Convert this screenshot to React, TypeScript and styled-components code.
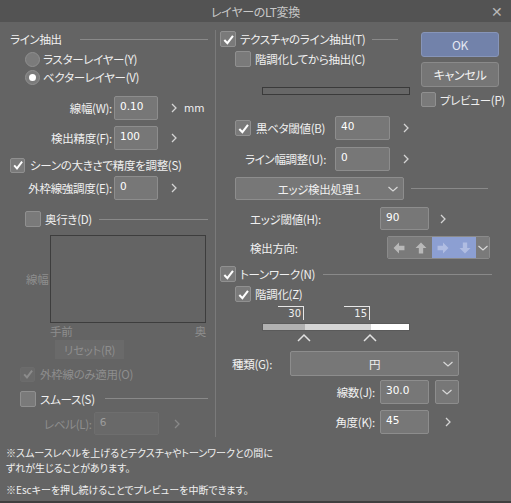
import React from "react";
import styled, { createGlobalStyle } from "styled-components";

const GlobalStyle = createGlobalStyle`
  html, body {
    margin: 0;
    padding: 0;
    background: #646464;
  }
  body {
    font-family: "Noto Sans CJK JP", "Noto Sans", sans-serif;
  }
`;

const TEXT = "#f0f0f0";
const DIM = "#8e8e8e";

const Dialog = styled.div`
  width: 511px;
  height: 503px;
  box-sizing: border-box;
  background: #646464;
  color: ${TEXT};
  font-size: 11.5px;
  font-feature-settings: "palt";
  letter-spacing: -0.3px;
  border-bottom: 2px solid #3f3f3f;
  display: flex;
  flex-direction: column;
  overflow: hidden;
`;

const TitleBar = styled.div`
  height: 22px;
  flex-shrink: 0;
  background: #535353;
  color: #c8c8c8;
  font-size: 12px;
  display: grid;
  grid-template-columns: 1fr auto 1fr;
  align-items: center;
`;

const Close = styled.span`
  justify-self: end;
  padding-right: 8px;
  font-size: 14px;
  color: #b8b8b8;
`;

const Body = styled.div`
  display: flex;
  height: 415px;
  padding-top: 8px;
  box-sizing: border-box;
  flex-shrink: 0;
`;

const LeftPanel = styled.div`
  width: 216px;
  box-sizing: border-box;
  border-right: 1px solid #7a7a7a;
  display: flex;
  flex-direction: column;
`;

const RightPanel = styled.div`
  flex: 1;
  display: flex;
  flex-direction: column;
`;

const Row = styled.div<{ $mt?: number; $pl?: number; $pr?: number; $h?: number }>`
  display: flex;
  align-items: center;
  flex-shrink: 0;
  height: ${(p) => p.$h ?? 16}px;
  margin-top: ${(p) => p.$mt ?? 0}px;
  padding-left: ${(p) => p.$pl ?? 0}px;
  padding-right: ${(p) => p.$pr ?? 0}px;
`;

const Label = styled.span<{ $w?: number; $right?: boolean; $dim?: boolean; $ml?: number }>`
  ${(p) => (p.$w ? `width: ${p.$w}px;` : "")}
  flex-shrink: 0;
  white-space: nowrap;
  text-align: ${(p) => (p.$right ? "right" : "left")};
  margin-left: ${(p) => p.$ml ?? 0}px;
  color: ${(p) => (p.$dim ? DIM : TEXT)};
`;

const Rule = styled.div<{ $ml?: number; $mr?: number }>`
  flex: 1;
  height: 1px;
  background: #898989;
  margin-left: ${(p) => p.$ml ?? 0}px;
  margin-right: ${(p) => p.$mr ?? 0}px;
`;

const Field = styled.div<{ $w: number; $disabled?: boolean; $ml?: number }>`
  width: ${(p) => p.$w}px;
  height: 100%;
  box-sizing: border-box;
  flex-shrink: 0;
  margin-left: ${(p) => p.$ml ?? 0}px;
  background: ${(p) => (p.$disabled ? "#696969" : "#777777")};
  border: 1px solid ${(p) => (p.$disabled ? "#6e6e6e" : "#8d8d8d")};
  border-radius: 2px;
  padding: 2px 0 0 5px;
  line-height: 15px;
  font-family: "DejaVu Sans", sans-serif;
  font-size: 10.5px;
  letter-spacing: 0;
  color: ${(p) => (p.$disabled ? "#9c9c9c" : "#ffffff")};
`;

const Unit = styled.span`
  margin-left: 6px;
  font-family: "DejaVu Sans", sans-serif;
  font-size: 10.5px;
  letter-spacing: 0;
`;

const BoxWrap = styled.span<{ $size: number; $disabled?: boolean }>`
  width: ${(p) => p.$size}px;
  height: ${(p) => p.$size}px;
  box-sizing: border-box;
  flex-shrink: 0;
  border-radius: 2px;
  background: ${(p) => (p.$disabled ? "#6a6a6a" : "#7a7a7a")};
  border: 1px solid ${(p) => (p.$disabled ? "#6c6c6c" : "#909090")};
  display: flex;
  align-items: center;
  justify-content: center;
`;

const Check = ({
  checked,
  disabled,
  size = 16,
}: {
  checked?: boolean;
  disabled?: boolean;
  size?: number;
}) => (
  <BoxWrap $size={size} $disabled={disabled}>
    {checked && (
      <svg width={size - 3} height={size - 3} viewBox="0 0 14 14">
        <polyline
          points="2.5,7.5 5.8,11 11.8,3"
          fill="none"
          stroke={disabled ? "#8c8c8c" : "#ffffff"}
          strokeWidth="2.2"
        />
      </svg>
    )}
  </BoxWrap>
);

const RadioCircle = styled.span`
  width: 15px;
  height: 15px;
  box-sizing: border-box;
  border-radius: 50%;
  flex-shrink: 0;
  background: #7b7b7b;
  border: 1px solid #8f8f8f;
  display: flex;
  align-items: center;
  justify-content: center;
`;

const Dot = styled.span`
  width: 7px;
  height: 7px;
  border-radius: 50%;
  background: #ffffff;
`;

const Chevron = ({ ml = 0, dim }: { ml?: number; dim?: boolean }) => (
  <svg width="8" height="12" viewBox="0 0 8 12" style={{ marginLeft: ml, flexShrink: 0 }}>
    <polyline
      points="2,2 6,6 2,10"
      fill="none"
      stroke={dim ? "#888888" : "#d4d4d4"}
      strokeWidth="1.3"
    />
  </svg>
);

const DownChevron = () => (
  <svg width="12" height="8" viewBox="0 0 12 8">
    <polyline points="1.5,2 6,6 10.5,2" fill="none" stroke="#d8d8d8" strokeWidth="1.2" />
  </svg>
);

const Button = styled.div<{ $primary?: boolean; $h: number; $mt?: number }>`
  height: ${(p) => p.$h}px;
  margin-top: ${(p) => p.$mt ?? 0}px;
  box-sizing: border-box;
  border-radius: 3px;
  background: ${(p) => (p.$primary ? "#7282aa" : "#767676")};
  border: 1px solid ${(p) => (p.$primary ? "#8795b9" : "#8a8a8a")};
  color: ${(p) => (p.$primary ? "#e4e8f2" : "#f2f2f2")};
  display: flex;
  align-items: center;
  justify-content: center;
  font-size: 12px;
`;

const ResetButton = styled.div`
  width: 69px;
  height: 19px;
  margin-left: 55px;
  margin-top: 3px;
  flex-shrink: 0;
  background: #6a6a6a;
  color: ${DIM};
  display: flex;
  align-items: center;
  justify-content: center;
`;

const Dropdown = styled.div<{ $w: number; $ml?: number; $iconOnly?: boolean }>`
  width: ${(p) => p.$w}px;
  height: 100%;
  box-sizing: border-box;
  flex-shrink: 0;
  margin-left: ${(p) => p.$ml ?? 0}px;
  background: #777777;
  border: 1px solid #8d8d8d;
  border-radius: 2px;
  display: grid;
  grid-template-columns: ${(p) => (p.$iconOnly ? "1fr" : "20px 1fr 20px")};
  align-items: center;
  justify-items: center;
`;

const GraphRow = styled.div`
  display: flex;
  align-items: center;
  height: 88px;
  margin-top: 8px;
  padding-left: 26px;
  flex-shrink: 0;
`;

const GraphBox = styled.div`
  width: 156px;
  height: 100%;
  box-sizing: border-box;
  border: 1px solid #3d3d3d;
`;

const AxisRow = styled.div`
  display: flex;
  justify-content: space-between;
  width: 156px;
  height: 12px;
  line-height: 12px;
  margin: 2px 0 0 50px;
  color: ${DIM};
`;

const TopBlock = styled.div`
  display: flex;
  flex-shrink: 0;
`;

const TopMain = styled.div`
  flex: 1;
  display: flex;
  flex-direction: column;
`;

const ButtonCol = styled.div`
  width: 78px;
  margin: 2px 12px 0 11px;
  display: flex;
  flex-direction: column;
`;

const EmptyBar = styled.div`
  height: 8px;
  margin: 20px 0 0 46px;
  box-sizing: border-box;
  border: 1px solid #3a3a3a;
  background: #676767;
`;

const DirControl = styled.div`
  display: flex;
  height: 100%;
  box-sizing: border-box;
  border: 1px solid #8a8a8a;
  border-radius: 2px;
  overflow: hidden;
`;

const DirSeg = styled.div<{ $active?: boolean; $w?: number }>`
  width: ${(p) => p.$w ?? 22}px;
  height: 100%;
  background: ${(p) => (p.$active ? "#8c9fd2" : "#7a7a7a")};
  display: flex;
  align-items: center;
  justify-content: center;
`;

const SliderBlock = styled.div`
  position: relative;
  width: 148px;
  height: 37px;
  margin: 4px 0 0 46px;
  flex-shrink: 0;
`;

const GradBar = styled.div`
  position: absolute;
  left: 0;
  right: 0;
  top: 17px;
  height: 8px;
  display: flex;
  box-sizing: border-box;
  border: 1px solid #5a5a5a;
`;

const GradSeg = styled.div<{ $c: string; $w?: number }>`
  background: ${(p) => p.$c};
  ${(p) => (p.$w ? `width: ${p.$w}px;` : "flex: 1;")}
`;

const Marker = styled.div`
  position: absolute;
  top: 0;
  width: 26px;
  height: 14px;
  box-sizing: border-box;
  border-top: 1px solid #e6e6e6;
  border-right: 1px solid #e6e6e6;
  text-align: right;
  padding-right: 2px;
  font-family: "DejaVu Sans", sans-serif;
  font-size: 10px;
  letter-spacing: 0;
  line-height: 14px;
`;

const Caret = styled.svg`
  position: absolute;
  top: 27px;
`;

const Notes = styled.div`
  padding: 9px 0 0 6px;
  font-size: 10px;
  line-height: 14.5px;
  letter-spacing: 0px;
`;

const NoteBlock = styled.div<{ $mt?: number }>`
  margin-top: ${(p) => p.$mt ?? 0}px;
`;

const Arrow = ({ dir, color }: { dir: "l" | "u" | "r" | "d"; color: string }) => {
  const rot = { l: 0, u: 90, r: 180, d: 270 }[dir];
  return (
    <svg width="12" height="12" viewBox="0 0 11 11">
      <polygon
        points="0.5,5.5 5.5,0.5 5.5,3.5 10.5,3.5 10.5,7.5 5.5,7.5 5.5,10.5"
        fill={color}
        transform={`rotate(${rot} 5.5 5.5)`}
      />
    </svg>
  );
};

const FieldRow = ({
  label,
  value,
  mt,
  unit,
}: {
  label: string;
  value: string;
  mt: number;
  unit?: string;
}) => (
  <Row $mt={mt} $h={24}>
    <Label $w={112} $right>
      {label}
    </Label>
    <Field $w={44} $ml={2}>
      {value}
    </Field>
    <Chevron ml={12} />
    {unit && <Unit>{unit}</Unit>}
  </Row>
);

const markers = [
  { value: 30, at: 42 },
  { value: 15, at: 108 },
];

export default function App() {
  return (
    <>
      <GlobalStyle />
      <Dialog>
        <TitleBar>
          <span />
          <span>レイヤーのLT変換</span>
          <Close>✕</Close>
        </TitleBar>
        <Body>
          <LeftPanel>
            <Row $mt={1} $pl={10} $pr={7}>
              <Label>ライン抽出</Label>
              <Rule $ml={18} />
            </Row>
            <Row $mt={4} $pl={25}>
              <RadioCircle />
              <Label $ml={3}>ラスターレイヤー(Y)</Label>
            </Row>
            <Row $mt={2} $pl={25}>
              <RadioCircle>
                <Dot />
              </RadioCircle>
              <Label $ml={3}>ベクターレイヤー(V)</Label>
            </Row>
            <FieldRow label="線幅(W):" value="0.10" mt={11} unit="mm" />
            <FieldRow label="検出精度(F):" value="100" mt={6} />
            <Row $mt={7} $pl={10}>
              <Check checked size={15} />
              <Label $ml={5}>シーンの大きさで精度を調整(S)</Label>
            </Row>
            <FieldRow label="外枠線強調度(E):" value="0" mt={3} />
            <Row $mt={11} $pl={25} $pr={7}>
              <Check />
              <Label $ml={4}>奥行き(D)</Label>
              <Rule $ml={7} />
            </Row>
            <GraphRow>
              <Label $w={24} $dim>
                線幅
              </Label>
              <GraphBox />
            </GraphRow>
            <AxisRow>
              <span>手前</span>
              <span>奥</span>
            </AxisRow>
            <ResetButton>リセット(R)</ResetButton>
            <Row $mt={7} $pl={20}>
              <Check checked disabled size={15} />
              <Label $ml={5} $dim>
                外枠線のみ適用(O)
              </Label>
            </Row>
            <Row $mt={8} $pl={20} $pr={7} $h={17}>
              <Check />
              <Label $ml={4}>スムース(S)</Label>
              <Rule $ml={10} />
            </Row>
            <Row $mt={5} $pl={44} $h={23}>
              <Label $dim>レベル(L):</Label>
              <Field $w={65} $ml={2} $disabled>
                6
              </Field>
              <Chevron ml={14} dim />
            </Row>
          </LeftPanel>

          <RightPanel>
            <TopBlock>
              <TopMain>
                <Row $mt={1} $pl={4}>
                  <Check checked />
                  <Label $ml={4}>テクスチャのライン抽出(T)</Label>
                  <Rule $ml={7} $mr={12} />
                </Row>
                <Row $mt={4} $pl={19}>
                  <Check />
                  <Label $ml={4}>階調化してから抽出(C)</Label>
                </Row>
                <EmptyBar />
              </TopMain>
              <ButtonCol>
                <Button $primary $h={25}>
                  OK
                </Button>
                <Button $h={25} $mt={5}>
                  キャンセル
                </Button>
                <Row $mt={5} $h={15}>
                  <Check size={15} />
                  <Label $ml={4}>プレビュー(P)</Label>
                </Row>
              </ButtonCol>
            </TopBlock>

            <Row $mt={9} $pl={19} $h={24}>
              <Check checked />
              <Label $w={79} $ml={5}>
                黒ベタ閾値(B)
              </Label>
              <Field $w={55}>40</Field>
              <Chevron ml={12} />
            </Row>
            <Row $mt={7} $pl={29} $h={24}>
              <Label $w={90}>ライン幅調整(U):</Label>
              <Field $w={55}>0</Field>
              <Chevron ml={12} />
            </Row>
            <Row $mt={6} $pl={19} $pr={23} $h={23}>
              <Dropdown $w={169}>
                <span />
                <span>エッジ検出処理１</span>
                <DownChevron />
              </Dropdown>
              <Rule $ml={7} />
            </Row>
            <Row $mt={7} $pl={34} $h={23}>
              <Label $w={130}>エッジ閾値(H):</Label>
              <Field $w={49}>90</Field>
              <Chevron ml={10} />
            </Row>
            <Row $mt={6} $pl={34} $h={23}>
              <Label $w={137}>検出方向:</Label>
              <DirControl>
                <DirSeg>
                  <Arrow dir="l" color="#b8b8b8" />
                </DirSeg>
                <DirSeg>
                  <Arrow dir="u" color="#b8b8b8" />
                </DirSeg>
                <DirSeg $active>
                  <Arrow dir="r" color="#b0bde2" />
                </DirSeg>
                <DirSeg $active>
                  <Arrow dir="d" color="#b0bde2" />
                </DirSeg>
                <DirSeg $w={13}>
                  <DownChevron />
                </DirSeg>
              </DirControl>
            </Row>
            <Row $mt={7} $pl={4} $pr={19}>
              <Check checked />
              <Label $ml={4}>トーンワーク(N)</Label>
              <Rule $ml={8} />
            </Row>
            <Row $mt={4} $pl={19}>
              <Check checked />
              <Label $ml={4}>階調化(Z)</Label>
            </Row>
            <SliderBlock>
              {markers.map((m) => (
                <Marker key={m.value} style={{ left: m.at - 26 }}>
                  {m.value}
                </Marker>
              ))}
              <GradBar>
                <GradSeg $c="#b1b1b1" $w={42} />
                <GradSeg $c="#d5d5d5" $w={66} />
                <GradSeg $c="#ffffff" />
              </GradBar>
              {markers.map((m) => (
                <Caret
                  key={m.value}
                  width="14"
                  height="9"
                  viewBox="0 0 14 9"
                  style={{ left: m.at - 7 }}
                >
                  <polyline points="1,8 7,2 13,8" fill="none" stroke="#e2e2e2" strokeWidth="1.5" />
                </Caret>
              ))}
            </SliderBlock>
            <Row $mt={8} $pl={16} $h={25}>
              <Label $w={58}>種類(G):</Label>
              <Dropdown $w={169}>
                <span />
                <span>円</span>
                <DownChevron />
              </Dropdown>
            </Row>
            <Row $mt={4} $h={24}>
              <Label $w={159} $right>
                線数(J):
              </Label>
              <Field $w={49} $ml={5}>
                30.0
              </Field>
              <Dropdown $w={24} $ml={6} $iconOnly>
                <DownChevron />
              </Dropdown>
            </Row>
            <Row $mt={6} $h={24}>
              <Label $w={159} $right>
                角度(K):
              </Label>
              <Field $w={49} $ml={5}>
                45
              </Field>
              <Chevron ml={15} />
            </Row>
          </RightPanel>
        </Body>
        <Notes>
          <NoteBlock>
            ※スムースレベルを上げるとテクスチャやトーンワークとの間に
            <br />
            ずれが生じることがあります。
          </NoteBlock>
          <NoteBlock $mt={8}>※Escキーを押し続けることでプレビューを中断できます。</NoteBlock>
        </Notes>
      </Dialog>
    </>
  );
}
